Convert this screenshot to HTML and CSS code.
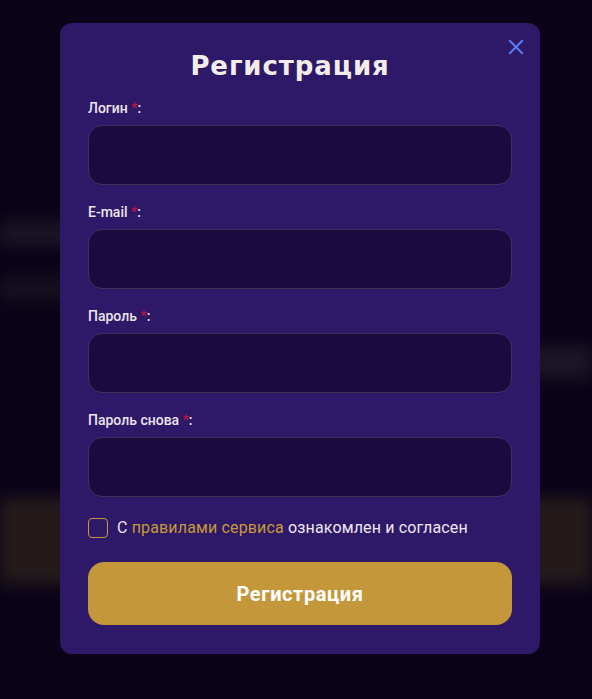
FILE: index.html
```html
<!DOCTYPE html>
<html lang="ru">
<head>
<meta charset="utf-8">
<title>Регистрация</title>
<link rel="stylesheet" href="styles.css">
</head>
<body>
<div class="backdrop" aria-hidden="true">
  <div class="bg-row bg-row--a"><span class="blob blob--wide"></span></div>
  <div class="bg-row bg-row--b"><span class="blob blob--short"></span></div>
  <div class="bg-row bg-row--c"><span class="blob blob--right"></span></div>
  <div class="bg-band"></div>
</div>

<div class="overlay">
  <form class="modal">
    <button type="button" class="close" aria-label="Закрыть">
      <svg width="16" height="16" viewBox="0 0 16 16"><path d="M2 2L14 14M14 2L2 14" stroke="#5a7ef2" stroke-width="2" stroke-linecap="square" fill="none"/></svg>
    </button>
    <h1 class="title">Регистрация</h1>

    <label class="field">
      <span class="label">Логин <span class="req">*</span>:</span>
      <input class="input" type="text">
    </label>
    <label class="field">
      <span class="label">E-mail <span class="req">*</span>:</span>
      <input class="input" type="email">
    </label>
    <label class="field">
      <span class="label">Пароль <span class="req">*</span>:</span>
      <input class="input" type="password">
    </label>
    <label class="field">
      <span class="label">Пароль снова <span class="req">*</span>:</span>
      <input class="input" type="password">
    </label>

    <label class="agree">
      <span class="box"></span>
      <span class="agree-text">С <a class="link" href="#">правилами сервиса</a> ознакомлен и согласен</span>
    </label>

    <button type="button" class="submit">Регистрация</button>
  </form>
</div>
</body>
</html>
```

FILE: styles.css
```css
* { box-sizing: border-box; }
html, body { margin: 0; padding: 0; }
body {
  background: #0b0418;
  width: 592px;
  height: 699px;
  overflow: hidden;
  font-family: Roboto, "Noto Sans", sans-serif;
}

.backdrop {
  display: flex;
  flex-direction: column;
  filter: blur(7px);
  height: 699px;
}
.bg-row { display: flex; }
.bg-row--a { margin-top: 222px; height: 24px; }
.bg-row--b { margin-top: 32px; height: 22px; }
.bg-row--c { margin-top: 46px; height: 32px; justify-content: flex-end; }
.blob { display: block; height: 100%; background: #1b1425; border-radius: 6px; }
.blob--wide { width: 140px; }
.blob--short { width: 110px; background: #17101f; }
.blob--right { width: 160px; background: #1b1525; }
.bg-band {
  margin-top: 120px;
  height: 86px;
  background: #241a1b;
}

.overlay {
  position: fixed;
  inset: 0;
  display: flex;
  justify-content: flex-start;
  align-items: flex-start;
  padding: 23px 0 0 60px;
}

.modal {
  position: relative;
  width: 480px;
  background: #2e1868;
  border-radius: 12px;
  padding: 27px 28px 29px;
  display: flex;
  flex-direction: column;
}

.close {
  position: absolute;
  top: 16px;
  right: 16px;
  width: 16px;
  height: 16px;
  padding: 0;
  border: 0;
  background: none;
  display: flex;
}

.title {
  margin: 0 0 18px;
  padding-right: 20px;
  text-align: center;
  font-family: "DejaVu Sans", sans-serif;
  font-weight: 700;
  font-size: 26px;
  line-height: 32px;
  color: #f3ede9;
  letter-spacing: 0.9px;
}

.field {
  display: flex;
  flex-direction: column;
  gap: 9px;
  margin-bottom: 19px;
}
.label {
  font-size: 14px;
  line-height: 16px;
  font-weight: 500;
  color: #ece4ec;
}
.req { color: #b8163f; }
.input {
  height: 60px;
  width: 100%;
  border-radius: 14px;
  border: 1px solid #44305a;
  background: #1b0a3f;
  outline: none;
  font: inherit;
  color: #fff;
}

.agree {
  display: flex;
  align-items: center;
  gap: 9px;
  margin-top: 2px;
  height: 20px;
}
.box {
  width: 20px;
  height: 20px;
  border: 1px solid #c69a3a;
  border-radius: 4px;
  flex: none;
}
.agree-text {
  font-size: 16px;
  line-height: 20px;
  color: #eee7ee;
  letter-spacing: 0.15px;
}
.link { color: #c69a3a; text-decoration: none; }

.submit {
  margin-top: 24px;
  height: 63px;
  border: 0;
  border-radius: 16px;
  background: #c4983a;
  color: #fff;
  font-family: Roboto, sans-serif;
  font-weight: 700;
  font-size: 20px;
  letter-spacing: 0.6px;
}
```
